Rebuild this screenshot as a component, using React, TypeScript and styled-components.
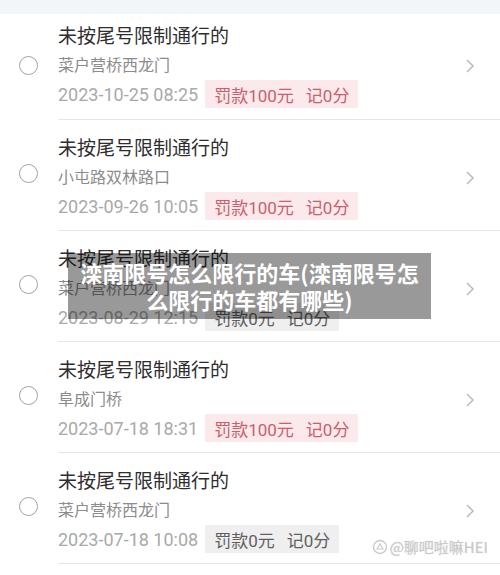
import styled, { createGlobalStyle } from "styled-components";

const GlobalStyle = createGlobalStyle`
  html, body {
    margin: 0;
    padding: 0;
    background: #ffffff;
  }
  body {
    font-family: "Roboto", "Noto Sans CJK SC", sans-serif;
  }
`;

type Record = {
  place: string;
  time: string;
  fine: number;
};

const records: Record[] = [
  { place: "菜户营桥西龙门", time: "2023-10-25 08:25", fine: 100 },
  { place: "小屯路双林路口", time: "2023-09-26 10:05", fine: 100 },
  { place: "菜户营桥西龙门", time: "2023-08-29 12:15", fine: 0 },
  { place: "阜成门桥", time: "2023-07-18 18:31", fine: 100 },
  { place: "菜户营桥西龙门", time: "2023-07-18 10:08", fine: 0 },
];

const Page = styled.div`
  position: relative;
  width: 500px;
  height: 575px;
  overflow: hidden;
  background: #ffffff;
`;

const TopStrip = styled.div`
  height: 14px;
  background: #f2f6f8;
`;

const Row = styled.div<{ $first?: boolean }>`
  display: flex;
  align-items: center;
  height: ${(p) => (p.$first ? 106 : 111)}px;
  padding-left: 19px;
`;

const Radio = styled.div`
  width: 17px;
  height: 17px;
  border: 1.6px solid #a2a2a2;
  border-radius: 50%;
  flex-shrink: 0;
  margin-bottom: 4px;
`;

const Body = styled.div<{ $first?: boolean }>`
  flex: 1;
  align-self: stretch;
  display: flex;
  align-items: flex-start;
  margin-left: 20px;
  padding-top: ${(p) => (p.$first ? 9 : 15)}px;
  padding-right: 25px;
  border-bottom: 1px solid #e6e6e6;
`;

const Texts = styled.div`
  display: flex;
  flex-direction: column;
`;

const Title = styled.div`
  font-family: "Noto Sans CJK SC", sans-serif;
  font-size: 19px;
  line-height: 24px;
  color: #2e2e2e;
`;

const Place = styled.div`
  margin-top: 6px;
  font-family: "Noto Sans CJK SC", sans-serif;
  font-size: 16px;
  line-height: 22px;
  color: #8c8c8c;
`;

const Meta = styled.div`
  display: flex;
  align-items: center;
  gap: 7px;
  margin-top: 5px;
`;

const Time = styled.span`
  font-family: "Roboto", sans-serif;
  font-size: 18px;
  color: #a9a9a9;
`;

const Chip = styled.span<{ $paid: boolean }>`
  display: inline-flex;
  align-items: center;
  gap: 12px;
  height: 28px;
  padding: 0 9px;
  font-family: "Roboto", "Noto Sans CJK SC", sans-serif;
  font-size: 17px;
  background: ${(p) => (p.$paid ? "#fbe9eb" : "#efefef")};
  color: ${(p) => (p.$paid ? "#c9606b" : "#5f5f5f")};
`;

const Chevron = styled.svg`
  flex-shrink: 0;
  margin-left: auto;
  align-self: center;
  margin-bottom: 10px;
`;

const Banner = styled.div`
  position: absolute;
  left: 68px;
  top: 253px;
  width: 363px;
  padding: 6px 0;
  background: rgba(0, 0, 0, 0.4);
  color: #ffffff;
  font-family: "Noto Sans CJK SC", sans-serif;
  font-weight: 700;
  font-size: 22px;
  line-height: 27px;
  text-align: center;
`;

const Watermark = styled.div`
  position: absolute;
  right: 12px;
  bottom: 18px;
  display: flex;
  align-items: center;
  gap: 2px;
  font-family: "Noto Sans CJK SC", sans-serif;
  font-size: 15px;
  color: rgba(200, 200, 200, 0.75);
  text-shadow: 0 0 1px rgba(120, 120, 120, 0.4);
`;

export default function App() {
  return (
    <Page>
      <GlobalStyle />
      <TopStrip />
      {records.map((r, i) => (
        <Row key={i} $first={i === 0}>
          <Radio />
          <Body $first={i === 0}>
            <Texts>
              <Title>未按尾号限制通行的</Title>
              <Place>{r.place}</Place>
              <Meta>
                <Time>{r.time}</Time>
                <Chip $paid={r.fine > 0}>
                  <span>{`罚款${r.fine}元`}</span>
                  <span>记0分</span>
                </Chip>
              </Meta>
            </Texts>
            <Chevron width="10" height="16" viewBox="0 0 10 16">
              <path d="M2 2 L8 8 L2 14" fill="none" stroke="#bdbdbd" strokeWidth="1.6" />
            </Chevron>
          </Body>
        </Row>
      ))}
      <Banner>
        滦南限号怎么限行的车(滦南限号怎
        <br />
        么限行的车都有哪些)
      </Banner>
      <Watermark>
        <svg width="16" height="16" viewBox="0 0 16 16">
          <circle cx="8" cy="8" r="6.5" fill="none" stroke="rgba(190,190,190,0.8)" strokeWidth="1.4" />
          <path d="M5 10 L8 5 L11 10 Z" fill="none" stroke="rgba(190,190,190,0.8)" strokeWidth="1.2" />
        </svg>
        <span>@聊吧啦嘛HEI</span>
      </Watermark>
    </Page>
  );
}
